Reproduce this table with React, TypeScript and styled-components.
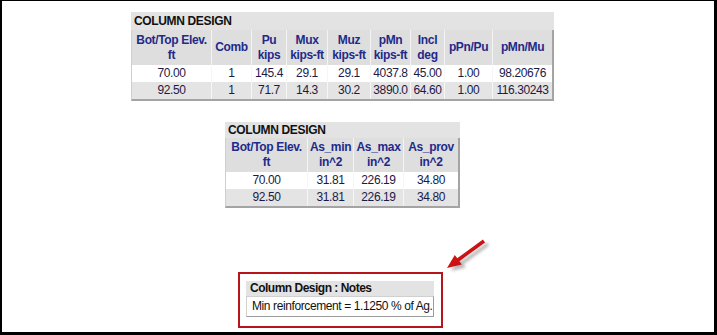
import React from "react";
import styled, { createGlobalStyle } from "styled-components";

const Global = createGlobalStyle`
  html, body { margin: 0; padding: 0; background: #fff; }
`;

const FONT = `"Liberation Sans", Arial, Helvetica, sans-serif`;

const Frame = styled.div`
  position: relative;
  width: 717px;
  height: 335px;
  box-sizing: border-box;
  border-style: solid;
  border-color: #000;
  border-width: 1px 3px 3px 2px;
  background: #fff;
  display: flex;
  flex-direction: column;
  align-items: flex-start;
  font-family: ${FONT};
  overflow: hidden;
`;

const Block = styled.section<{ $x: number; $y: number }>`
  margin: ${(p) => p.$y}px 0 0 ${(p) => p.$x}px;
  display: flex;
  flex-direction: column;
  align-items: flex-start;
`;

const TitleBar = styled.div<{ $w: number; $h: number }>`
  width: ${(p) => p.$w}px;
  height: ${(p) => p.$h}px;
  box-sizing: border-box;
  background: #e3e3e3;
  color: #111;
  font-weight: bold;
  font-size: 12px;
  letter-spacing: -0.35px;
  line-height: ${(p) => p.$h}px;
  padding-left: 3px;
  white-space: nowrap;
`;

const Grid = styled.table`
  border-collapse: separate;
  border-spacing: 0;
  table-layout: fixed;
  border-left: 1px solid #cfcfcf;
  border-right: 2px solid #a4a4a4;
  border-bottom: 2px solid #a4a4a4;
  font-size: 12px;
`;

const HeadCell = styled.th<{ $h: number }>`
  height: ${(p) => p.$h}px;
  padding: 0;
  box-sizing: border-box;
  background: #dedede;
  border-right: 1px solid #f4f4f4;
  color: #1f2a8a;
  font-weight: bold;
  font-size: 12px;
  letter-spacing: -0.35px;
  line-height: 15px;
  text-align: center;
  vertical-align: middle;
  white-space: nowrap;
  &:last-child { border-right: none; }
`;

const Row = styled.tr<{ $shade: boolean }>`
  background: ${(p) => (p.$shade ? "#e4e4e4" : "#ffffff")};
`;

const Cell = styled.td`
  height: 17px;
  padding: 0;
  box-sizing: border-box;
  border-right: 1px solid #f6f6f6;
  color: #1a1a48;
  font-size: 12px;
  letter-spacing: -0.4px;
  line-height: 17px;
  text-align: center;
  white-space: nowrap;
  &:last-child { border-right: none; }
`;

const NotesBox = styled.div`
  width: 205px;
  height: 56px;
  box-sizing: border-box;
  border: 2px solid #b8141c;
  padding: 7px 0 0 6px;
  display: flex;
  flex-direction: column;
`;

const NotesTitle = styled.div`
  width: 188px;
  height: 15px;
  box-sizing: border-box;
  background: #e3e3e3;
  color: #111;
  font-weight: bold;
  font-size: 12px;
  letter-spacing: -0.5px;
  line-height: 15px;
  padding-left: 4px;
  white-space: nowrap;
`;

const NotesLine = styled.div`
  width: 188px;
  height: 21px;
  box-sizing: border-box;
  border: 1px solid #d0d0d0;
  border-right-color: #9c9c9c;
  border-bottom-color: #9c9c9c;
  color: #111;
  font-size: 12px;
  letter-spacing: -0.4px;
  line-height: 19px;
  padding-left: 5px;
  white-space: nowrap;
`;

const Pointer = styled.svg`
  position: absolute;
  left: 438px;
  top: 234px;
  width: 60px;
  height: 42px;
  overflow: visible;
`;

type Col = { label: string[]; width: number };

const designCols: Col[] = [
  { label: ["Bot/Top Elev.", "ft"], width: 80 },
  { label: ["Comb"], width: 40 },
  { label: ["Pu", "kips"], width: 35 },
  { label: ["Mux", "kips-ft"], width: 41 },
  { label: ["Muz", "kips-ft"], width: 43 },
  { label: ["pMn", "kips-ft"], width: 40 },
  { label: ["Incl", "deg"], width: 34 },
  { label: ["pPn/Pu"], width: 48 },
  { label: ["pMn/Mu"], width: 59 },
];

const designRows = [
  ["70.00", "1", "145.4", "29.1", "29.1", "4037.8", "45.00", "1.00", "98.20676"],
  ["92.50", "1", "71.7", "14.3", "30.2", "3890.0", "64.60", "1.00", "116.30243"],
];

const steelCols: Col[] = [
  { label: ["Bot/Top Elev.", "ft"], width: 82 },
  { label: ["As_min", "in^2"], width: 46 },
  { label: ["As_max", "in^2"], width: 50 },
  { label: ["As_prov", "in^2"], width: 54 },
];

const steelRows = [
  ["70.00", "31.81", "226.19", "34.80"],
  ["92.50", "31.81", "226.19", "34.80"],
];

function ReportTable({
  title,
  cols,
  rows,
  titleH,
  headH,
}: {
  title: string;
  cols: Col[];
  rows: string[][];
  titleH: number;
  headH: number;
}) {
  const total = cols.reduce((s, c) => s + c.width, 0);
  return (
    <>
      <TitleBar $w={total + 3} $h={titleH}>{title}</TitleBar>
      <Grid style={{ width: total + 3 }}>
        <colgroup>
          {cols.map((c, i) => (
            <col key={i} style={{ width: c.width }} />
          ))}
        </colgroup>
        <thead>
          <tr>
            {cols.map((c, i) => (
              <HeadCell key={i} $h={headH}>
                {c.label.map((l, j) => (
                  <React.Fragment key={j}>
                    {j > 0 && <br />}
                    {l}
                  </React.Fragment>
                ))}
              </HeadCell>
            ))}
          </tr>
        </thead>
        <tbody>
          {rows.map((r, i) => (
            <Row key={i} $shade={i % 2 === 1}>
              {r.map((v, j) => (
                <Cell key={j}>{v}</Cell>
              ))}
            </Row>
          ))}
        </tbody>
      </Grid>
    </>
  );
}

export default function App() {
  return (
    <>
      <Global />
      <Frame>
        <Block $x={129} $y={11}>
          <ReportTable title="COLUMN DESIGN" cols={designCols} rows={designRows} titleH={18} headH={35} />
        </Block>
        <Block $x={223} $y={21}>
          <ReportTable title="COLUMN DESIGN" cols={steelCols} rows={steelRows} titleH={16} headH={34} />
        </Block>
        <Block $x={236} $y={64}>
          <NotesBox>
            <NotesTitle>Column Design : Notes</NotesTitle>
            <NotesLine>Min reinforcement = 1.1250 % of Ag.</NotesLine>
          </NotesBox>
        </Block>
        <Pointer viewBox="0 0 60 42">
          <defs>
            <filter id="arrowShade" x="-30%" y="-30%" width="160%" height="160%">
              <feGaussianBlur stdDeviation="1.4" />
            </filter>
            <linearGradient id="arrowFill" x1="0" y1="0" x2="1" y2="1">
              <stop offset="0" stopColor="#e01818" />
              <stop offset="1" stopColor="#b80c0c" />
            </linearGradient>
          </defs>
          <polygon
            points="42.94,4.55 45.06,7.45 19.36,26.2 21.8,29.6 7,33 14.8,19.9 17.24,23.3"
            fill="#8a8a8a"
            opacity="0.6"
            transform="translate(4,3)"
            filter="url(#arrowShade)"
          />
          <polygon
            points="42.94,4.55 45.06,7.45 19.36,26.2 21.8,29.6 7,33 14.8,19.9 17.24,23.3"
            fill="url(#arrowFill)"
          />
        </Pointer>
      </Frame>
    </>
  );
}
